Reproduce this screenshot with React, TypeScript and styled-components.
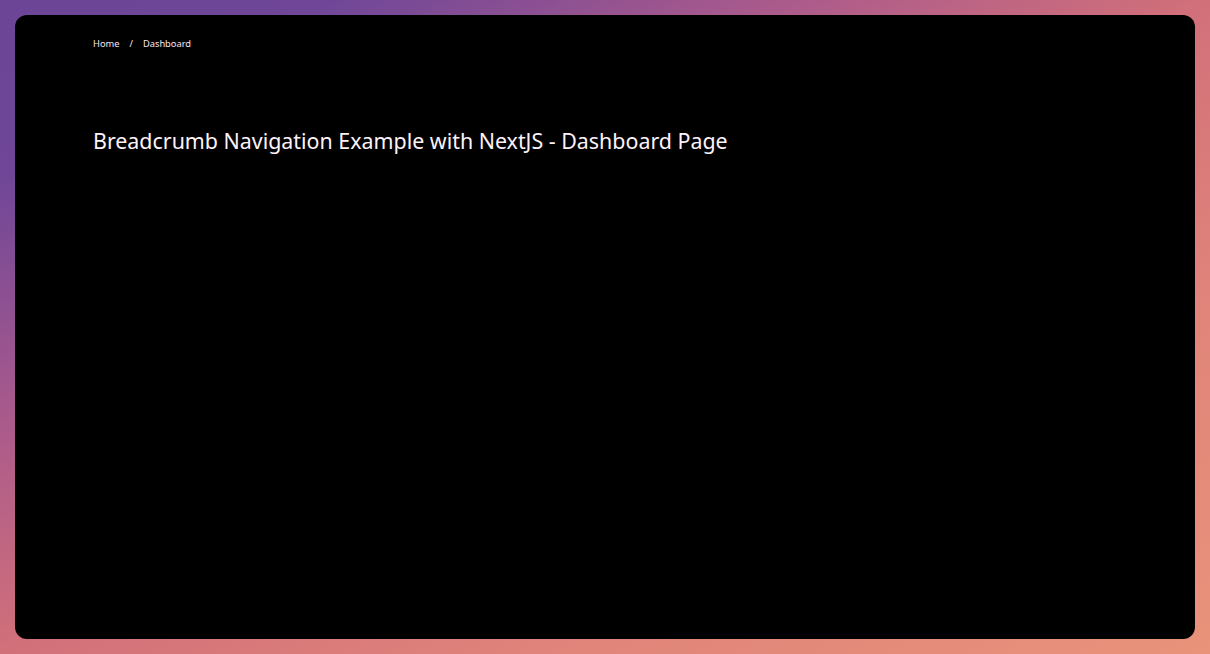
import styled, { createGlobalStyle } from "styled-components";

const GlobalStyle = createGlobalStyle`
  html, body {
    margin: 0;
    padding: 0;
    height: 100%;
  }

  #root {
    height: 100%;
  }
`;

const Frame = styled.div`
  box-sizing: border-box;
  height: 100vh;
  width: 100vw;
  padding: 15px;
  background: linear-gradient(
    to bottom right,
    #6c4596 0%,
    #704798 14%,
    #a95a8c 32%,
    #d2707a 50%,
    #e0837a 72%,
    #e9937a 100%
  );
  display: flex;
`;

const Card = styled.main`
  flex: 1;
  background: #000;
  border-radius: 12px;
  padding: 22px 78px;
  display: flex;
  flex-direction: column;
  font-family: "Noto Sans", "Open Sans", sans-serif;
  color: #fdf0f6;
`;

const Crumbs = styled.nav`
  display: flex;
  align-items: center;
  gap: 9px;
  font-size: 9.3px;
  line-height: 14px;
`;

const Crumb = styled.a`
  color: #fbe4f0;
  text-decoration: none;
`;

const Sep = styled.span`
  color: #fbe4f0;
  padding: 0 1px;
`;

const Title = styled.h1`
  margin: 76px 0 0;
  font-size: 21.4px;
  font-weight: 400;
  line-height: 28px;
  color: #fdf2f8;
`;

const CRUMBS = [
  { label: "Home", href: "/" },
  { label: "Dashboard", href: "/dashboard" },
];

export default function App() {
  return (
    <>
      <GlobalStyle />
      <Frame>
        <Card>
          <Crumbs>
            {CRUMBS.map((c, i) => (
              <span key={c.href} style={{ display: "contents" }}>
                {i > 0 && <Sep>/</Sep>}
                <Crumb href={c.href}>{c.label}</Crumb>
              </span>
            ))}
          </Crumbs>
          <Title>Breadcrumb Navigation Example with NextJS - Dashboard Page</Title>
        </Card>
      </Frame>
    </>
  );
}
